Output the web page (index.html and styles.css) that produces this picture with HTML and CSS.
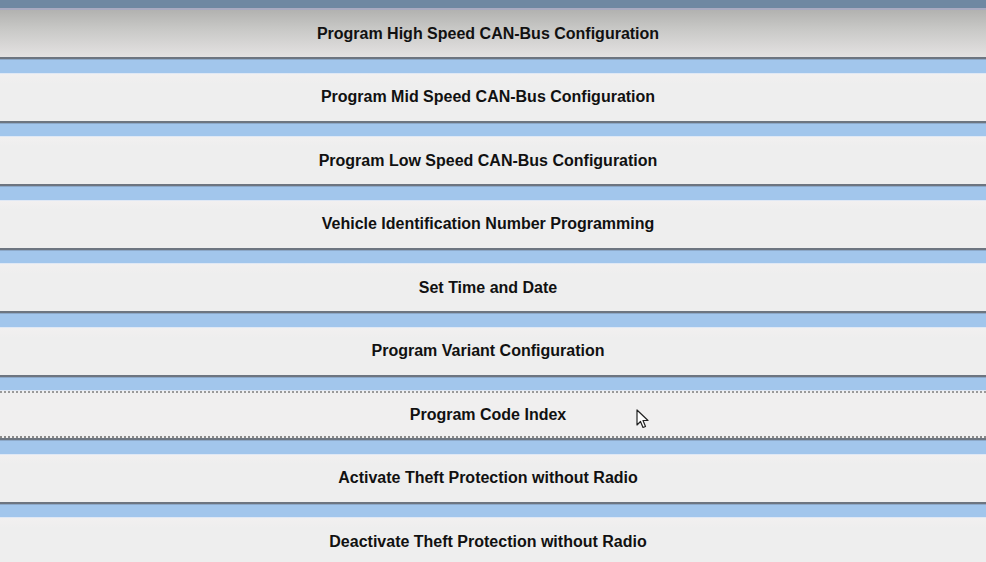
FILE: index.html
```html
<!DOCTYPE html>
<html>
<head>
<meta charset="utf-8">
<link rel="stylesheet" href="styles.css">
</head>
<body>
<div class="page">
  <div class="topbar"></div>
  <div class="list">
    <div class="item"><div class="btn btn-pressed">Program High Speed CAN-Bus Configuration</div><div class="sep"></div></div>
    <div class="item"><div class="btn">Program Mid Speed CAN-Bus Configuration</div><div class="sep"></div></div>
    <div class="item"><div class="btn">Program Low Speed CAN-Bus Configuration</div><div class="sep"></div></div>
    <div class="item"><div class="btn">Vehicle Identification Number Programming</div><div class="sep"></div></div>
    <div class="item"><div class="btn">Set Time and Date</div><div class="sep"></div></div>
    <div class="item"><div class="btn">Program Variant Configuration</div><div class="sep"></div></div>
    <div class="item"><div class="btn btn-focus">Program Code Index
      <svg class="cursor" width="14" height="21" viewBox="0 0 14 21"><path d="M1 1 L1 16 L4.5 12.5 L7 18.5 L9.5 17.5 L7 11.5 L12 11.5 Z" fill="#fff" stroke="#222" stroke-width="1.2" stroke-linejoin="round"/></svg>
    </div><div class="sep"></div></div>
    <div class="item"><div class="btn">Activate Theft Protection without Radio</div><div class="sep"></div></div>
    <div class="item"><div class="btn">Deactivate Theft Protection without Radio</div><div class="sep"></div></div>
  </div>
</div>
</body>
</html>
```
FILE: styles.css
```css
html, body {
  margin: 0;
  padding: 0;
  background: #eeeeee;
  overflow: hidden;
}
.page {
  width: 986px;
  height: 562px;
  overflow: hidden;
  font-family: "Liberation Sans", Arial, sans-serif;
}
.topbar {
  height: 8px;
  background: #6f88a2;
  border-bottom: 2px solid #a9aac0;
}
.list {
  display: flex;
  flex-direction: column;
}
.item {
  display: flex;
  flex-direction: column;
}
.btn {
  position: relative;
  height: 47px;
  display: flex;
  align-items: center;
  justify-content: center;
  padding-right: 10px;
  font-size: 16px;
  font-weight: bold;
  color: #111111;
  background: linear-gradient(#f2f0f0, #eeeeee 20%, #eeeeee);
  border-bottom: 2px solid #6d7580;
}
.btn-pressed {
  height: 47px;
  background: linear-gradient(#b2b2b0, #c8c8c6 40%, #e4e2e2);
}
.btn-focus {
  background: #f0efef;
  border-top: 2px dotted #9a9a9a;
  border-bottom: 2px dotted #8a8a8a;
  height: 43px;
  margin-bottom: 2px;
  box-shadow: 0 2px 0 #6d7580;
}
.sep {
  height: 12.5px;
  background: #a2c6ec;
  border-top: 1px solid #8ca8c8;
  border-bottom: 1px solid #dfe8f5;
}
.cursor {
  position: absolute;
  left: 636px;
  top: 16px;
}
```
